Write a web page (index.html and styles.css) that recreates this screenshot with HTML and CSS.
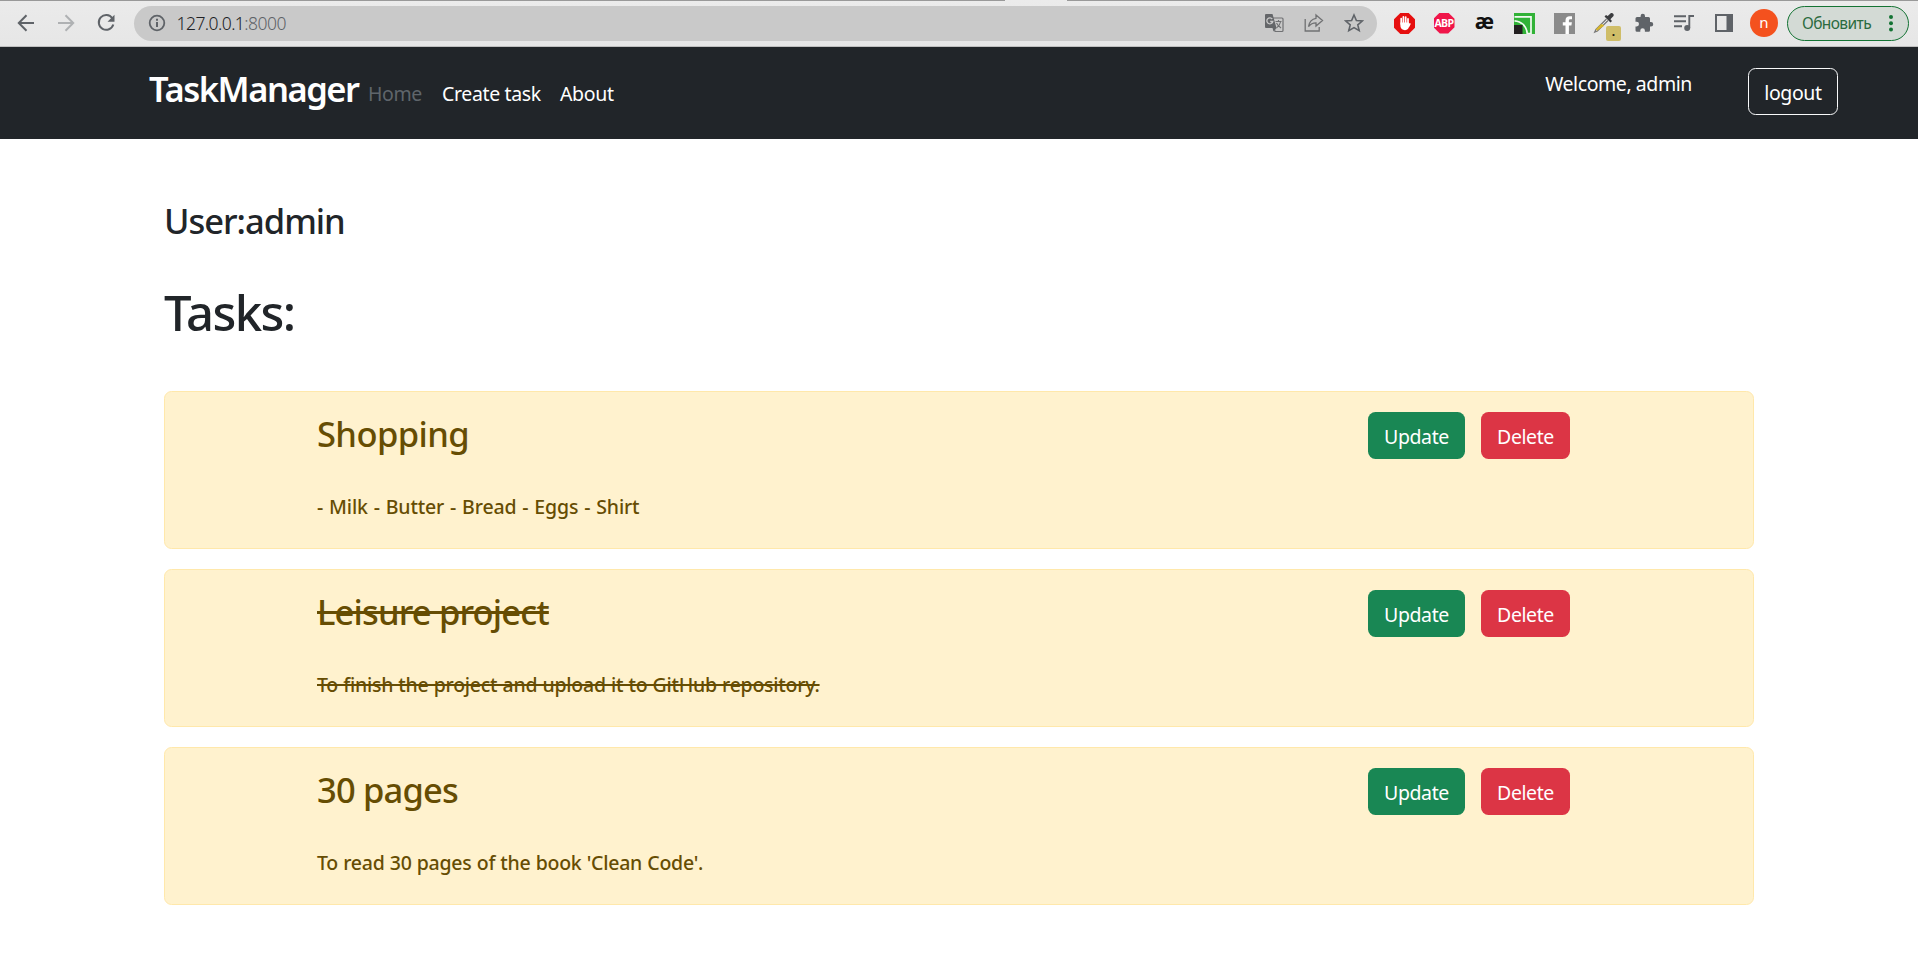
FILE: index.html
```html
<!DOCTYPE html>
<html lang="en">
<head>
<meta charset="utf-8">
<title>TaskManager</title>
<link rel="stylesheet" href="styles.css">
</head>
<body>
<div class="toolbar">
  <div class="tab-edge"><span class="edge-left"></span><span class="edge-right"></span></div>
  <div class="cells">
    <span class="cell"><svg width="20" height="20" viewBox="0 0 20 20" fill="none" stroke="#5f6368" stroke-width="2"><path d="M18 10H3M10.5 2.3L2.8 10l7.700 7.700"/></svg></span>
    <span class="cell"><svg width="20" height="20" viewBox="0 0 20 20" fill="none" stroke="#afb1b3" stroke-width="2"><path d="M2 10h15M9.500 2.300L17.200 10l-7.700 7.700"/></svg></span>
    <span class="cell"><svg width="20" height="20" viewBox="0 0 20 20"><path d="M16.300 5.200A7.400 7.400 0 1 0 17.300 11.500" fill="none" stroke="#5f6368" stroke-width="2"/><path d="M18.500 1.800v7h-7z" fill="#5f6368"/></svg></span>
  </div>
  <div class="omnibox">
    <svg class="info" width="18" height="18" viewBox="0 0 18 18"><circle cx="9" cy="9" r="7.300" fill="none" stroke="#5f6368" stroke-width="1.800"/><path d="M8 8h2v5H8zM8 4.800h2v2H8z" fill="#5f6368"/></svg>
    <span class="url">127.0.0.1<span class="port">:8000</span></span>
    <div class="omni-icons">
      <span class="cell"><svg width="20" height="20" viewBox="0 0 20 20"><path d="M8 5h10a1 1 0 0 1 1 1v11.500a1 1 0 0 1-1 1h-7z" fill="none" stroke="#707173" stroke-width="1.200"/><path d="M2 1h6.500l4 14H2a1 1 0 0 1-1-1V2a1 1 0 0 1 1-1zM8.500 15h4l-3 3.500z" fill="#646669"/><path d="M8.300 6A3 3 0 1 0 8.800 8.500H6.200" fill="none" stroke="#cacaca" stroke-width="1.300"/><path d="M11.500 8.500h6M14.500 7v1.500M16.500 9c-.5 2.500-2 4.500-4 6M12.500 10c1 2 2.500 3.500 4.500 5" fill="none" stroke="#707173" stroke-width="1.100"/></svg></span>
      <span class="cell"><svg width="20" height="20" viewBox="0 0 20 20" fill="none" stroke="#707173" stroke-width="1.300"><path d="M1.200 6v12h14v-4"/><path d="M12 2l6.500 5.500L12 13V9.800C8.500 9.800 6.500 11 4.500 13.500 5.300 9 7.500 6 12 5.300z"/></svg></span>
      <span class="cell"><svg width="20" height="20" viewBox="0 0 20 20" fill="none" stroke="#5f6368" stroke-width="1.600"><path d="M10 2l2.400 5.500 5.900.5-4.500 3.900 1.400 5.800-5.200-3.100-5.200 3.100 1.400-5.800L1.700 8l5.900-.5z"/></svg></span>
    </div>
  </div>
  <div class="cells extensions">
    <span class="cell"><svg width="21" height="21" viewBox="0 0 21 21"><path d="M6.300 0h8.400L21 6.300v8.400L14.700 21H6.300L0 14.700V6.300z" fill="#e60f0f"/><path d="M7.200 11V5.500M9.400 10V3.800M11.700 10V4.100M14 11V5.800" stroke="#fff" stroke-width="1.700" stroke-linecap="round"/><path d="M6.400 9.500h8.500v3.800c0 2.200-1.400 3.900-3.900 3.900-2.700 0-4.600-2-4.600-4.200z" fill="#fff"/><path d="M14.500 13.500l1.400-2.600" stroke="#fff" stroke-width="1.600" stroke-linecap="round"/></svg></span>
    <span class="cell"><span class="abp">ABP</span></span>
    <span class="cell"><span class="ae">æ</span></span>
    <span class="cell"><svg width="21" height="21" viewBox="0 0 21 21"><rect width="21" height="21" fill="#31b237"/><path d="M.5 3.900H17V20.500H13.200C12.800 13.500 7.500 8.300.5 7.800" fill="none" stroke="#f2fbf2" stroke-width="1.700"/><path d="M0 9.800c5.500.3 10.500 4.500 11.200 11.200H8.500v-9.500H0z" fill="#31b237"/><rect y="12" width="8.500" height="9" fill="#231f20"/></svg></span>
    <span class="cell"><svg width="21" height="21" viewBox="0 0 21 21"><rect width="21" height="21" fill="#8b8b8b"/><path d="M11.500 21v-8.500H8.800V9.300h2.700V7.500c0-3 1.700-4.300 4.200-4.300h2.300v3.100h-1.600c-1.100 0-1.500.5-1.500 1.500v1.500h3l-.5 3.200h-2.500V21z" fill="#fff"/></svg></span>
    <span class="cell dropper"><svg width="22" height="22" viewBox="0 0 22 22"><path d="M13.500 7L3 17.500 1.800 20l2.600-1L15 8.500" fill="#fff" stroke="#777" stroke-width="1.300"/><path d="M9 12.500l-5.500 5.500 7-5" stroke="#d7b52b" stroke-width="2" fill="none"/><path d="M11.500 4.500l6 6 1.500-1.500-1.600-1.700L20.500 4c1-1.500-1-3.700-2.800-2.800l-3 2.900L13 3z" fill="#3c3d40"/></svg><span class="badge">.</span></span>
    <span class="cell"><svg width="20" height="20" viewBox="0 0 20 20" fill="#5f6368"><path d="M17 9h-1V5.500A1.500 1.500 0 0 0 14.500 4H11V3a2.200 2.200 0 0 0-4.400 0v1H3a1.500 1.500 0 0 0-1.500 1.500v3.300h1.200a2.300 2.300 0 0 1 0 4.600H1.500v3.800A1.500 1.500 0 0 0 3 18.700h3.300v-1.200a2.300 2.300 0 0 1 4.600 0v1.200h3.600a1.500 1.500 0 0 0 1.500-1.500v-3.700h1A2.250 2.250 0 0 0 17 9z"/></svg></span>
    <span class="cell"><svg width="20" height="20" viewBox="0 0 20 20" fill="none" stroke="#5f6368"><path d="M0 3.300h12M0 8.300h12M0 13.300h8M15.300 15V3H20" stroke-width="1.900"/><circle cx="13.200" cy="15" r="3" fill="#5f6368" stroke="none"/></svg></span>
    <span class="cell"><svg width="18" height="18" viewBox="0 0 18 18"><rect x="1" y="1" width="16" height="16" fill="none" stroke="#5f6368" stroke-width="2"/><path d="M11.500 1H17v16h-5.500z" fill="#5f6368"/></svg></span>
    <span class="cell"><span class="avatar">n</span></span>
  </div>
  <div class="refresh"><span class="refresh-text">Обновить</span><svg width="4" height="18" viewBox="0 0 4 18" fill="#137333"><circle cx="2" cy="3" r="2"/><circle cx="2" cy="9.200" r="2"/><circle cx="2" cy="15.500" r="2"/></svg></div>
</div>

<nav class="navbar">
  <a class="brand">TaskManager</a>
  <a class="link link-home">Home</a>
  <a class="link link-create">Create task</a>
  <a class="link link-about">About</a>
  <span class="welcome">Welcome, admin</span>
  <a class="btn logout"><span>logout</span></a>
</nav>

<main class="content">
  <h3 class="user">User:admin</h3>
  <h1 class="heading">Tasks:</h1>
  <section class="tasks">
    <article class="card">
      <div class="task"><h3 class="title">Shopping</h3><p class="desc desc-list">- Milk - Butter - Bread - Eggs - Shirt</p></div>
      <div class="actions"><a class="btn update"><span>Update</span></a><a class="btn delete"><span>Delete</span></a></div>
    </article>
    <article class="card">
      <div class="task"><h3 class="title title-long"><s>Leisure project</s></h3><p class="desc"><s>To finish the project and upload it to GitHub repository.</s></p></div>
      <div class="actions"><a class="btn update"><span>Update</span></a><a class="btn delete"><span>Delete</span></a></div>
    </article>
    <article class="card">
      <div class="task"><h3 class="title title-long">30 pages</h3><p class="desc">To read 30 pages of the book 'Clean Code'.</p></div>
      <div class="actions"><a class="btn update"><span>Update</span></a><a class="btn delete"><span>Delete</span></a></div>
    </article>
  </section>
</main>
</body>
</html>
```

FILE: styles.css
```css
* { box-sizing: border-box; }
body {
  margin: 0;
  background: #fff;
  color: #212529;
  font-family: "Noto Sans", "Open Sans", sans-serif;
  font-size: 19.5px;
  line-height: 30px;
  overflow: hidden;
}
h1, h3, p { margin: 0; }
svg { display: block; flex: none; }

/* browser toolbar */
.toolbar {
  position: relative;
  display: flex;
  align-items: center;
  height: 47px;
  padding-left: 6px;
  background: linear-gradient(#ebebeb, #e6e6e6);
  border-bottom: 1px solid #bfbfbf;
}
.tab-edge {
  position: absolute;
  top: 0; left: 0; right: 0;
  display: flex;
  justify-content: space-between;
}
.edge-left, .edge-right { height: 1px; background: #999; }
.edge-left { width: 1005px; }
.edge-right { width: 851px; }
.cells { display: flex; }
.cell {
  display: flex;
  width: 40px;
  height: 36px;
  align-items: center;
  justify-content: center;
}
.omnibox {
  display: flex;
  align-items: center;
  width: 1243px;
  height: 35px;
  margin-left: 8px;
  padding: 0 3px 0 13.5px;
  border-radius: 18px;
  background: #c9c9c9;
}
.url {
  margin-left: 11px;
  font-size: 17.5px;
  letter-spacing: -0.55px;
  font-weight: 300;
  color: #202124;
}
.port { color: #5f6368; }
.omni-icons { display: flex; margin-left: auto; }
.extensions { margin-left: 7px; }
.abp {
  width: 21px;
  height: 21px;
  background: #f0164a;
  clip-path: polygon(30% 0, 70% 0, 100% 30%, 100% 70%, 70% 100%, 30% 100%, 0 70%, 0 30%);
  color: #fff;
  font: bold 10.5px/21px "Open Sans", sans-serif;
  text-align: center;
  letter-spacing: -0.6px;
}
.ae { font: bold 21px/24px "Noto Sans", sans-serif; color: #111; margin-top: -4px; letter-spacing: -1px; }
.dropper { position: relative; }
.badge {
  position: absolute;
  left: 22px; top: 21px;
  width: 15px; height: 15px;
  border-radius: 2px;
  background: #cfbd68;
  color: #111;
  font: bold 12px/12px "Noto Sans", sans-serif;
  text-align: center;
}
.avatar {
  width: 28px;
  height: 28px;
  border-radius: 50%;
  background: #f4511e;
  color: #fff;
  font-size: 15px;
  line-height: 26px;
  text-align: center;
}
.refresh {
  display: flex;
  align-items: center;
  justify-content: space-between;
  width: 122px;
  height: 35px;
  margin-left: 3px;
  padding: 0 15px 0 14px;
  border: 1px solid #137333;
  border-radius: 18px;
  background: #d3dad5;
  color: #2b6b3f;
}
.refresh-text { font-size: 15.5px; line-height: 32px; letter-spacing: -0.6px; }

/* site navigation */
.navbar {
  display: flex;
  align-items: flex-start;
  height: 92px;
  padding: 21px 80px 0 149px;
  background: #212529;
  color: #fff;
}
.brand { width: 219px; font-size: 34.5px; font-weight: 600; line-height: 42px; letter-spacing: -1.45px; white-space: nowrap; }
.link { padding-top: 11px; white-space: nowrap; letter-spacing: -0.35px; }
.link-home { width: 74px; color: #5f656b; letter-spacing: -0.4px; }
.link-create { width: 118px; }
.welcome { margin: 1px 56px 0 auto; white-space: nowrap; letter-spacing: -0.42px; }
.btn {
  display: flex;
  align-items: center;
  justify-content: center;
  height: 47px;
  padding-top: 3px;
  border-radius: 7.5px;
  color: #fff;
  letter-spacing: -0.4px;
}
.logout { width: 90px; border: 1px solid #f8f9fa; }

/* task list */
.content { padding: 61px 164px 0; }
.user { font-size: 34.5px; font-weight: 500; line-height: 42px; letter-spacing: -1px; }
.heading { margin-top: 40px; font-size: 49px; font-weight: 500; line-height: 60px; letter-spacing: -1.6px; }
.tasks { display: flex; flex-direction: column; gap: 20px; margin-top: 49px; }
.card {
  display: flex;
  justify-content: space-between;
  height: 158px;
  padding: 20px 183px 0 152px;
  border: 1px solid #ffe8ab;
  border-radius: 7.5px;
  background: #fff2ce;
  color: #664d03;
}
.title { font-size: 34.5px; font-weight: 500; line-height: 42px; letter-spacing: -0.6px; margin-top: 1px; }
.title-long { letter-spacing: -0.83px; }
.title s, .desc s { text-decoration-thickness: 0.09em; }
.desc { margin-top: 37px; font-size: 19.5px; font-weight: 500; letter-spacing: -0.25px; word-spacing: 0.4px; }
.desc-list { letter-spacing: -0.15px; word-spacing: 1px; }
.actions { display: flex; gap: 16px; }
.update { width: 97px; background: #198754; }
.delete { width: 89px; background: #dc3545; }
```
